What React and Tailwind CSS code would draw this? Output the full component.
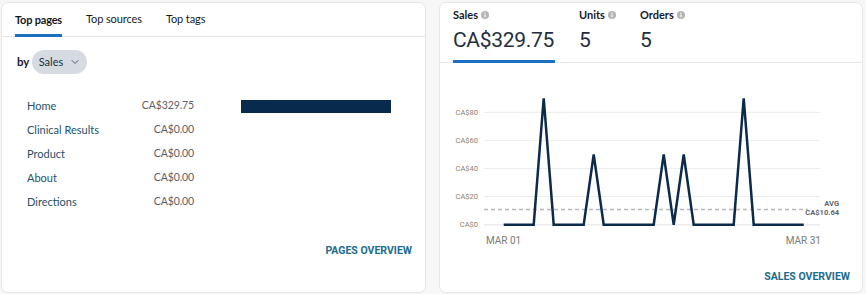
import { ChevronDown } from "lucide-react";

const font = { fontFamily: "Roboto, 'Liberation Sans', sans-serif" };
const narrow = { fontFamily: "Lato, Roboto, 'Liberation Sans', sans-serif" };

const pages = [
  { name: "Home", value: "CA$329.75", bar: 150 },
  { name: "Clinical Results", value: "CA$0.00", bar: 0 },
  { name: "Product", value: "CA$0.00", bar: 0 },
  { name: "About", value: "CA$0.00", bar: 0 },
  { name: "Directions", value: "CA$0.00", bar: 0 },
];

// daily sales, Mar 01 - Mar 31
const daily = [0, 0, 0, 0, 90, 0, 0, 0, 0, 50, 0, 0, 0, 0, 0, 0, 50, 0, 50, 0, 0, 0, 0, 0, 90, 0, 0, 0, 0, 0, 0];

const Info = () => (
  <svg width="8" height="8" viewBox="0 0 8 8" className="inline-block ml-[3px] -mt-[1px]">
    <circle cx="4" cy="4" r="4" fill="#b4b4b4" />
    <rect x="3.4" y="3.3" width="1.2" height="3" fill="#fff" />
    <rect x="3.4" y="1.5" width="1.2" height="1.1" fill="#fff" />
  </svg>
);

const TopPagesCard = () => (
  <div className="w-[425px] h-[291px] bg-white border border-[#e6e6e6] rounded-[7px] flex flex-col" style={narrow}>
    <div className="h-[34px] flex items-end gap-[24px] px-[13px] border-b border-[#e3e6ea]">
      <div className="pb-[6px] text-[11px] font-bold text-[#16191f] tracking-[-0.2px] border-b-[3px] border-[#1d6fc2] -mb-[1px]">
        Top pages
      </div>
      <div className="pb-[9px] text-[11px] text-[#16191f] tracking-[-0.1px]">Top sources</div>
      <div className="pb-[9px] text-[11px] text-[#16191f] tracking-[-0.1px]">Top tags</div>
    </div>
    <div className="flex items-center gap-[3px] pl-[15px] mt-[13px]">
      <span className="text-[11.5px] font-bold text-[#16191f]">by</span>
      <button className="h-[24px] w-[55px] rounded-full bg-[#d5dbe1] flex items-center justify-center gap-[6px] text-[11px] text-[#232f3e]">
        Sales <ChevronDown size={12} strokeWidth={2} className="text-[#545b64]" />
      </button>
    </div>
    <div className="mt-[20px] pl-[25px] flex flex-col">
      {pages.map((p) => (
        <div key={p.name} className="h-[24px] flex items-center">
          <div className="w-[105px] text-[11px] text-[#26506a]">{p.name}</div>
          <div className="w-[62px] text-right text-[10.5px] text-[#5d6066] tracking-[-0.1px]">{p.value}</div>
          <div className="ml-[47px] w-[150px] h-[13px] flex">
            <div className="h-full bg-[#072a4d]" style={{ width: p.bar }} />
          </div>
        </div>
      ))}
    </div>
    <div className="mt-[29px] pr-[13px] text-right text-[10.5px] font-bold text-[#1b6d8e]" style={font}>
      PAGES OVERVIEW
    </div>
  </div>
);

const Metric = ({ label, value, active, width }) => (
  <div className={`flex flex-col ${width} ${active ? "border-b-[3px] border-[#1d6fc2]" : "border-b-[3px] border-transparent"} -mb-[1px]`}>
    <div className="text-[11px] font-bold text-[#16191f] leading-[14px] flex items-center" style={narrow}>
      {label}
      <Info />
    </div>
    <div className="text-[21px] text-[#232f3e] leading-[26px] mt-[5px] mb-[7px] tracking-[-0.3px]">{value}</div>
  </div>
);

const Chart = () => {
  const x0 = 502.7;
  const base = 224.7;
  const k = 1.405;
  const pts = daily.map((v, i) => `${x0 + i * 10},${base - v * k}`).join(" ");
  const ticks = [80, 60, 40, 20, 0];
  return (
    <svg width="424" height="190" viewBox="439 63 424 190" className="block">
      {ticks.map((t) => {
        const y = base - t * k;
        return (
          <g key={t}>
            <line x1="483" x2="819" y1={y} y2={y} stroke="#ececec" strokeWidth={t === 0 ? 1.5 : 1} />
            <text x="477" y={y + 2.5} textAnchor="end" fontSize="7.5" fill="#8d8173" style={font}>
              CA${t}
            </text>
          </g>
        );
      })}
      <line x1="483" x2="807" y1="209.5" y2="209.5" stroke="#b9b9b9" strokeWidth="1.5" strokeDasharray="4 3" />
      <text x="838" y="206" textAnchor="end" fontSize="7.5" fontWeight="bold" fill="#5f6670" style={font}>AVG</text>
      <text x="838" y="215" textAnchor="end" fontSize="7.5" fontWeight="bold" fill="#5f6670" style={font}>CA$10.64</text>
      <polyline points={pts} fill="none" stroke="#0c2a4a" strokeWidth="2.5" strokeLinejoin="miter" />
      <text x="485" y="244" fontSize="10" fill="#7b7b7b" style={font}>MAR 01</text>
      <text x="820" y="244" textAnchor="end" fontSize="10" fill="#7b7b7b" style={font}>MAR 31</text>
    </svg>
  );
};

const SalesCard = () => (
  <div className="w-[424px] h-[291px] bg-white border border-[#e6e6e6] rounded-[7px] flex flex-col">
    <div className="h-[60px] flex items-end pl-[13px] gap-[24px] border-b border-[#e3e6ea]">
      <Metric label="Sales" value="CA$329.75" active width="w-[102px]" />
      <Metric label="Units" value="5" width="w-[37px]" />
      <Metric label="Orders" value="5" width="w-[60px]" />
    </div>
    <Chart />
    <div className="mt-[16px] pr-[12px] text-right text-[10.5px] font-bold text-[#1b6d8e]">
      SALES OVERVIEW
    </div>
  </div>
);

export default function App() {
  return (
    <div className="w-[866px] h-[294px] bg-[#f7f7f7] pl-[1px] pt-[2px] flex gap-[13px] overflow-hidden" style={font}>
      <TopPagesCard />
      <SalesCard />
    </div>
  );
}
